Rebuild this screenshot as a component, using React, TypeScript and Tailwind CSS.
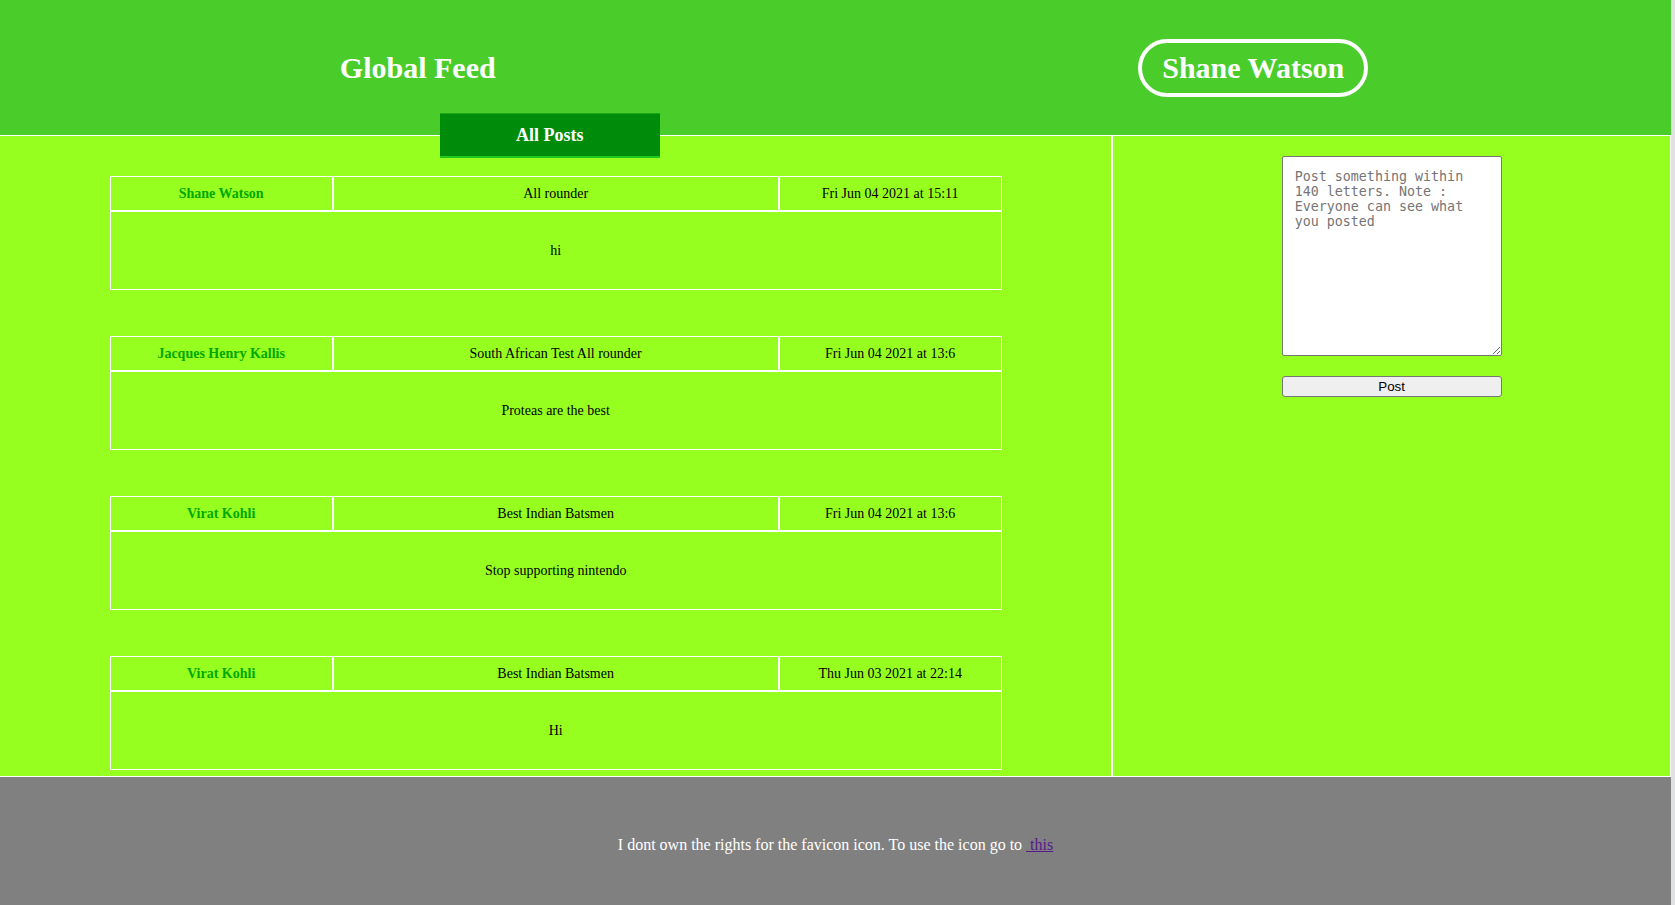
import React from 'react';

interface Post {
  id: number;
  name: string;
  bio: string;
  date: string;
  content: string;
}

const posts: Post[] = [
  { id: 1, name: 'Shane Watson', bio: 'All rounder', date: 'Fri Jun 04 2021 at 15:11', content: 'hi' },
  { id: 2, name: 'Jacques Henry Kallis', bio: 'South African Test All rounder', date: 'Fri Jun 04 2021 at 13:6', content: 'Proteas are the best' },
  { id: 3, name: 'Virat Kohli', bio: 'Best Indian Batsmen', date: 'Fri Jun 04 2021 at 13:6', content: 'Stop supporting nintendo' },
  { id: 4, name: 'Virat Kohli', bio: 'Best Indian Batsmen', date: 'Thu Jun 03 2021 at 22:14', content: 'Hi' },
];

function PostCard({ post }: { post: Post }) {
  return (
    <div className="w-[892px] mx-auto mt-[46px] first:mt-0 text-[14px] text-black">
      <div className="grid grid-cols-[1fr_2fr_1fr]">
        <div className="h-[35px] pb-[1px] border border-white flex items-center justify-center font-bold text-[#00a800]">
          {post.name}
        </div>
        <div className="h-[35px] pb-[1px] border border-white flex items-center justify-center">{post.bio}</div>
        <div className="h-[35px] pb-[1px] border border-white flex items-center justify-center">{post.date}</div>
      </div>
      <div className="h-[79px] border border-white flex items-center justify-center">{post.content}</div>
    </div>
  );
}

export default function App() {
  return (
    <div className="flex font-['Liberation_Serif',serif]">
      <div className="flex-1">
        {/* Header */}
        <header className="h-[136px] bg-[#4acd2b] border-b border-white flex">
          <div className="w-1/2 flex items-center justify-center">
            <h1 className="text-[30px] font-bold text-white">Global Feed</h1>
          </div>
          <div className="w-1/2 flex items-center justify-center">
            <div className="border-4 border-white rounded-full px-[20px] py-[7px] text-[30px] font-bold text-white leading-[36px]">
              Shane Watson
            </div>
          </div>
        </header>

        {/* Main */}
        <main className="flex bg-[#97ff1f] border-r border-b border-white">
          <section className="w-2/3 border-r-2 border-white pb-[6px]">
            <div className="flex justify-center pr-[12px]">
              <button className="-mt-[23px] w-[220px] h-[45px] bg-[#008c0b] border-t border-b-2 border-t-[#18a818] border-b-[#20c820] text-white font-bold text-[18px]">
                All Posts
              </button>
            </div>
            <div className="mt-[18px]">
              {posts.map((post) => (
                <PostCard key={post.id} post={post} />
              ))}
            </div>
          </section>

          <aside className="w-1/3 flex justify-center pt-[20px]">
            <div className="w-[220px] flex flex-col gap-[20px]">
              <textarea
                className="h-[200px] w-full bg-white border border-[#767676] rounded-[2px] p-3 font-['DejaVu_Sans_Mono',monospace] text-[13.33px] leading-[normal] placeholder:text-[#757575] resize"
                placeholder="Post something within 140 letters. Note : Everyone can see what you posted"
              />
              <button className="h-[21px] w-full bg-[#efefef] border border-[#767676] rounded-[3px] font-['Liberation_Sans',sans-serif] text-[13.33px] text-black">
                Post
              </button>
            </div>
          </aside>
        </main>

        {/* Footer */}
        <footer className="h-[136px] bg-[#808080] flex items-center justify-center text-white text-[16px]">
          <p>
            I dont own the rights for the favicon icon. To use the icon go to{' '}
            <a href="#" className="text-[#551a8b] underline">
              {'\u00a0'}this
            </a>
          </p>
        </footer>
      </div>
      <div className="w-[4px] bg-[#dfe1e5]" />
    </div>
  );
}
